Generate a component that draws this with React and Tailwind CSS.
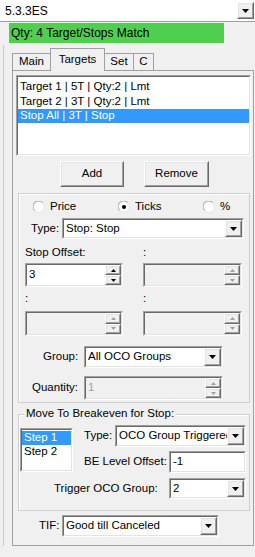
import React from "react";

const Arrow = ({ disabled }) => (
  <svg width="7" height="4" viewBox="0 0 7 4">
    <path d="M0 0h7L3.5 4z" fill={disabled ? "#a0a0a0" : "#000"} />
  </svg>
);

const TinyUp = ({ disabled }) => (
  <svg width="5" height="3" viewBox="0 0 5 3">
    <path d="M2.5 0L5 3H0z" fill={disabled ? "#a0a0a0" : "#000"} />
  </svg>
);
const TinyDown = ({ disabled }) => (
  <svg width="5" height="3" viewBox="0 0 5 3">
    <path d="M0 0h5L2.5 3z" fill={disabled ? "#a0a0a0" : "#000"} />
  </svg>
);

const Sunken = ({ className, inner, children }) => (
  <div className={"border border-t-[#a0a0a0] border-l-[#a0a0a0] border-r-white border-b-white " + className}>
    <div className={"border border-t-[#696969] border-l-[#696969] border-r-[#e3e3e3] border-b-[#e3e3e3] w-full h-full " + inner}>
      {children}
    </div>
  </div>
);

const Raised = ({ className, inner, children }) => (
  <div className={"border border-t-white border-l-white border-r-[#696969] border-b-[#696969] " + className}>
    <div className={"border border-t-[#e3e3e3] border-l-[#e3e3e3] border-r-[#a0a0a0] border-b-[#a0a0a0] w-full h-full bg-[#f0f0f0] flex items-center justify-center " + inner}>
      {children}
    </div>
  </div>
);

const Combo = ({ className, text }) => (
  <Sunken className={className} inner="bg-white flex items-center">
    <span className="pl-[2px] flex-1 whitespace-nowrap overflow-hidden">{text}</span>
    <Raised className="w-[17px] h-full shrink-0">
      <Arrow />
    </Raised>
  </Sunken>
);

const Numeric = ({ className, text, disabled }) => (
  <Sunken className={className} inner={(disabled ? "bg-[#f0f0f0] text-[#a0a0a0]" : "bg-white") + " flex items-stretch"}>
    <span className="pl-[2px] flex-1 flex items-center">{text}</span>
    <div className="w-[16px] flex flex-col shrink-0">
      <Raised className="flex-1">
        <TinyUp disabled={disabled} />
      </Raised>
      <Raised className="flex-1">
        <TinyDown disabled={disabled} />
      </Raised>
    </div>
  </Sunken>
);

const Radio = ({ checked, label, className }) => (
  <div className={"flex items-center gap-[5px] " + className}>
    <svg width="12" height="12" viewBox="0 0 12 12">
      <circle cx="6" cy="6" r="5.5" fill="#fff" stroke="#e3e3e3" />
      <path d="M1.5 9.5A5.5 5.5 0 0 1 9.5 1.5" stroke="#a0a0a0" fill="none" />
      {checked && <circle cx="6" cy="6" r="2" fill="#000" />}
    </svg>
    <span>{label}</span>
  </div>
);

export default function App() {
  return (
    <div
      className="w-[255px] h-[557px] bg-[#f0f0f0] overflow-hidden text-[11.5px] text-black leading-none whitespace-nowrap"
      style={{ fontFamily: '"Liberation Sans", Arial, sans-serif' }}
    >
      {/* top combo */}
      <div className="h-[22px] bg-white border-b border-[#a0a0a0] flex items-center pl-[5px] pr-[1px]">
        <span className="flex-1 text-[12px]">5.3.3ES</span>
        <Raised className="w-[17px] h-[17px]">
          <Arrow />
        </Raised>
      </div>

      {/* status */}
      <div className="ml-[9px] mt-[1px] w-[215px] h-[20px] bg-[#4ecf50] flex items-center pl-[2px] text-[12px]">
        Qty: 4 Target/Stops Match
      </div>

      <div className="ml-[3px] border-l border-[#c8c8c8] pl-[8px] mt-[2px]">
        {/* tabs */}
        <div className="flex items-end h-[25px]">
          <div className="w-[39px] h-[17px] border border-b-0 border-[#a0a0a0] flex items-center justify-center bg-[#f0f0f0]">Main</div>
          <div className="w-[55px] h-[23px] border border-b-0 border-[#a0a0a0] flex items-center justify-center bg-[#f0f0f0] relative z-10 -mb-[1px] -ml-[1px]">Targets</div>
          <div className="w-[29px] h-[17px] border border-b-0 border-l-0 border-[#a0a0a0] flex items-center justify-center">Set</div>
          <div className="w-[20px] h-[17px] border border-b-0 border-l-0 border-[#a0a0a0] flex items-center justify-center">C</div>
        </div>
        {/* tab page */}
        <div className="w-[242px] h-[476px] border border-[#a0a0a0] bg-[#f0f0f0] pt-[4px] pl-[3px]">
          {/* listbox */}
          <Sunken className="w-[235px] h-[81px]" inner="bg-white pt-[2px]">
            <div className="h-[15px] flex items-center pl-[2px]">Target 1 | 5T | Qty:2 | Lmt</div>
            <div className="h-[15px] flex items-center pl-[2px]">Target 2 | 3T | Qty:2 | Lmt</div>
            <div className="h-[14px] flex items-center pl-[2px] bg-[#3399ff] text-white">Stop All | 3T | Stop</div>
          </Sunken>

          {/* buttons */}
          <div className="flex mt-[5px] h-[26px]">
            <Raised className="ml-[44px] w-[64px] h-[26px]">Add</Raised>
            <Raised className="ml-[20px] w-[65px] h-[26px]">Remove</Raised>
          </div>

          {/* frame 1 */}
          <div className="ml-[2px] mt-[6px] w-[232px] h-[210px] border border-[#d0d0d0] shadow-[inset_1px_1px_0_#fff] relative">
            <div className="flex items-center h-[14px] mt-[6px] pl-[14px]">
              <Radio className="w-[85px]" label="Price" />
              <Radio className="w-[85px]" checked label="Ticks" />
              <Radio className="w-[40px]" label="%" />
            </div>
            <div className="flex items-center mt-[4px] h-[21px]">
              <span className="ml-[12px] w-[31px]">Type:</span>
              <Combo className="w-[182px] h-[21px]" text="Stop: Stop" />
            </div>
            <div className="flex mt-[8px]">
              <div className="ml-[6px] w-[98px]">
                <div className="h-[12px]">Stop Offset:</div>
                <Numeric className="mt-[4px] w-[98px] h-[24px]" text="3" />
                <div className="h-[12px] mt-[6px]">:</div>
                <Numeric className="mt-[6px] w-[98px] h-[25px]" disabled text="" />
              </div>
              <div className="ml-[20px] w-[99px]">
                <div className="h-[12px]">:</div>
                <Numeric className="mt-[4px] w-[99px] h-[24px]" disabled text="" />
                <div className="h-[12px] mt-[6px]">:</div>
                <Numeric className="mt-[6px] w-[99px] h-[25px]" disabled text="" />
              </div>
            </div>
            <div className="flex items-center mt-[10px] h-[22px]">
              <span className="ml-[24px] w-[41px]">Group:</span>
              <Combo className="w-[139px] h-[22px]" text="All OCO Groups" />
            </div>
            <div className="flex items-center mt-[8px] h-[24px]">
              <span className="ml-[13px] w-[52px] text-[#000]">Quantity:</span>
              <Numeric className="w-[139px] h-[24px]" disabled text="1" />
            </div>
          </div>

          {/* frame 2 */}
          <div className="ml-[2px] mt-[5px] w-[232px] h-[103px] relative pt-[6px]">
            <div className="absolute left-[6px] top-0 px-[2px] bg-[#f0f0f0] z-10">Move To Breakeven for Stop:</div>
            <div className="border border-[#d0d0d0] shadow-[inset_1px_1px_0_#fff] h-[97px] pt-[6px]">
              <div className="flex">
                <Sunken className="ml-[1px] w-[53px] h-[44px] mt-[7px]" inner="bg-white pt-[1px]">
                  <div className="h-[14px] flex items-center pl-[2px] bg-[#3399ff] text-white">Step 1</div>
                  <div className="h-[14px] flex items-center pl-[2px]">Step 2</div>
                </Sunken>
                <div className="ml-[11px]">
                  <div className="flex items-center h-[22px] mt-[4px]">
                    <span className="w-[31px]">Type:</span>
                    <Combo className="w-[131px] h-[22px]" text="OCO Group Triggered" />
                  </div>
                  <div className="flex items-center h-[22px] mt-[4px]">
                    <span className="w-[85px] whitespace-nowrap">BE Level Offset:</span>
                    <Sunken className="w-[77px] h-[22px]" inner="bg-white flex items-center pl-[2px]">-1</Sunken>
                  </div>
                </div>
              </div>
              <div className="flex items-center h-[21px] mt-[5px]">
                <span className="ml-[35px] w-[115px]">Trigger OCO Group:</span>
                <Combo className="w-[77px] h-[21px]" text="2" />
              </div>
            </div>
          </div>

          {/* TIF */}
          <div className="flex items-center mt-[4px] h-[22px]">
            <span className="ml-[23px] w-[23px]">TIF:</span>
            <Combo className="w-[157px] h-[22px]" text="Good till Canceled" />
          </div>
        </div>
      </div>
    </div>
  );
}
